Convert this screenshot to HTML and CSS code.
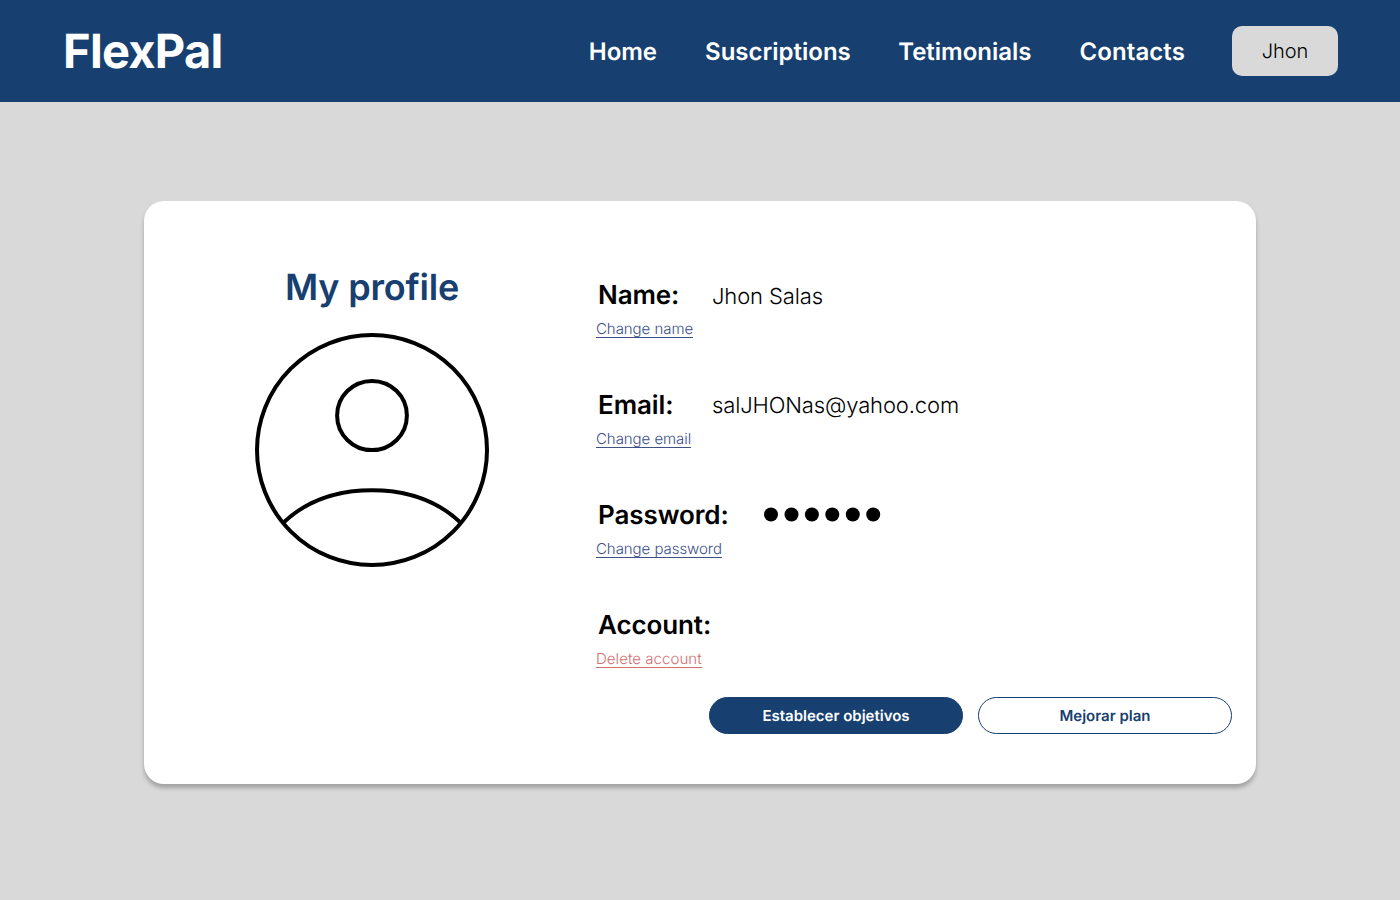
FILE: index.html
```
<!DOCTYPE html>
<html lang="es">
<head>
<meta charset="utf-8">
<title>FlexPal</title>
<link rel="stylesheet" href="styles.css">
</head>
<body>
<header class="header">
  <a class="logo">FlexPal</a>
  <nav class="nav">
    <a class="nav-home">Home</a>
    <a class="nav-subs">Suscriptions</a>
    <a class="nav-test">Tetimonials</a>
    <a class="nav-cont">Contacts</a>
  </nav>
  <button class="user">Jhon</button>
</header>
<main class="card">
  <section class="profile">
    <h1 class="title">My profile</h1>
    <svg class="avatar" width="234" height="234" viewBox="0 0 234 234" fill="none" stroke="#000" stroke-width="4">
      <circle cx="117" cy="117" r="115"/>
      <ellipse cx="117" cy="82.500" rx="34.900" ry="34.600"/>
      <path d="M28 190C50 169 81 157.200 117 157.200S184 169 206 190"/>
    </svg>
  </section>
  <section class="details">
    <div class="field">
      <div class="row"><span class="label">Name:</span><span class="value">Jhon Salas</span></div>
      <a class="link">Change name</a>
    </div>
    <div class="field">
      <div class="row"><span class="label">Email:</span><span class="value value-email">salJHONas@yahoo.com</span></div>
      <a class="link">Change email</a>
    </div>
    <div class="field">
      <div class="row"><span class="label label-wide">Password:</span>
        <svg class="dots" width="118" height="15" viewBox="0 0 118 15"><circle cx="7" cy="7.500" r="7"/><circle cx="27.500" cy="7.500" r="7"/><circle cx="47.900" cy="7.500" r="7"/><circle cx="68.300" cy="7.500" r="7"/><circle cx="88.800" cy="7.500" r="7"/><circle cx="109.200" cy="7.500" r="7"/></svg>
      </div>
      <a class="link">Change password</a>
    </div>
    <div class="field">
      <div class="row"><span class="label">Account:</span></div>
      <a class="link danger">Delete account</a>
    </div>
    <div class="actions">
      <button class="btn btn-fill">Establecer objetivos</button>
      <button class="btn">Mejorar plan</button>
    </div>
  </section>
</main>
</body>
</html>
```
FILE: styles.css
```
* { box-sizing: border-box; }
body { margin: 0; min-height: 900px; background: #d9d9d9; font-family: Inter, "Liberation Sans", sans-serif; color: #000; text-rendering: geometricPrecision; }
button { font-family: inherit; padding: 0; border: 0; text-rendering: inherit; }
.header { display: flex; align-items: center; height: 102px; padding: 0 62px 0 63px; background: #173f70; color: #fff; }
.logo { margin-right: auto; padding-top: 2px; line-height: 56px; font-size: 47px; font-weight: 700; letter-spacing: -0.7px; }
.nav { display: flex; gap: 48px; margin-right: 47px; font-size: 24px; font-weight: 600; white-space: nowrap; }
.nav-subs { margin-right: -0.6px; }
.nav-cont { letter-spacing: 0.08px; }
.user { width: 106px; height: 50px; border-radius: 10px; background: #d9d9d9; color: #000; font-size: 20px; font-weight: 300; }
.card { display: flex; width: 1112px; height: 583px; margin: 99px auto 0; border-radius: 20px; background: #fff; box-shadow: 0 4px 4px rgba(0, 0, 0, .25); }
.profile { display: flex; flex-direction: column; align-items: center; width: 456px; flex: none; padding-top: 64px; }
.title { margin: 0 0 24px; color: #173f70; font-size: 36px; line-height: 44px; font-weight: 600; letter-spacing: -0.2px; }
.details { flex: 1; padding: 77px 24px 0 0; margin-left: -4px; }
.field { height: 110px; }
.row { display: flex; align-items: center; height: 32px; padding-left: 2px; }
.label { min-width: 114px; padding-top: 2px; font-size: 26px; font-weight: 600; letter-spacing: -0.1px; }
.label-wide { min-width: 166px; }
.value { font-size: 22px; font-weight: 300; padding-top: 6px; letter-spacing: -0.13px; }
.value-email { padding-top: 4px; }
.link { display: block; width: fit-content; margin-top: 10px; height: 18px; line-height: 18px; border-bottom: 1px solid #3d5088; font-size: 15px; font-weight: 300; color: #3d5088; letter-spacing: -0.05px; }
.danger { color: #d36f73; border-color: #d36f73; letter-spacing: 0.05px; }
.actions { display: flex; justify-content: flex-end; gap: 15px; margin-top: -21px; }
.btn { width: 254px; height: 37px; border: 1px solid #173f70; border-radius: 19px; background: #fff; color: #173f70; font-size: 15px; font-weight: 600; }
.btn-fill { background: #173f70; color: #fff; }
```
